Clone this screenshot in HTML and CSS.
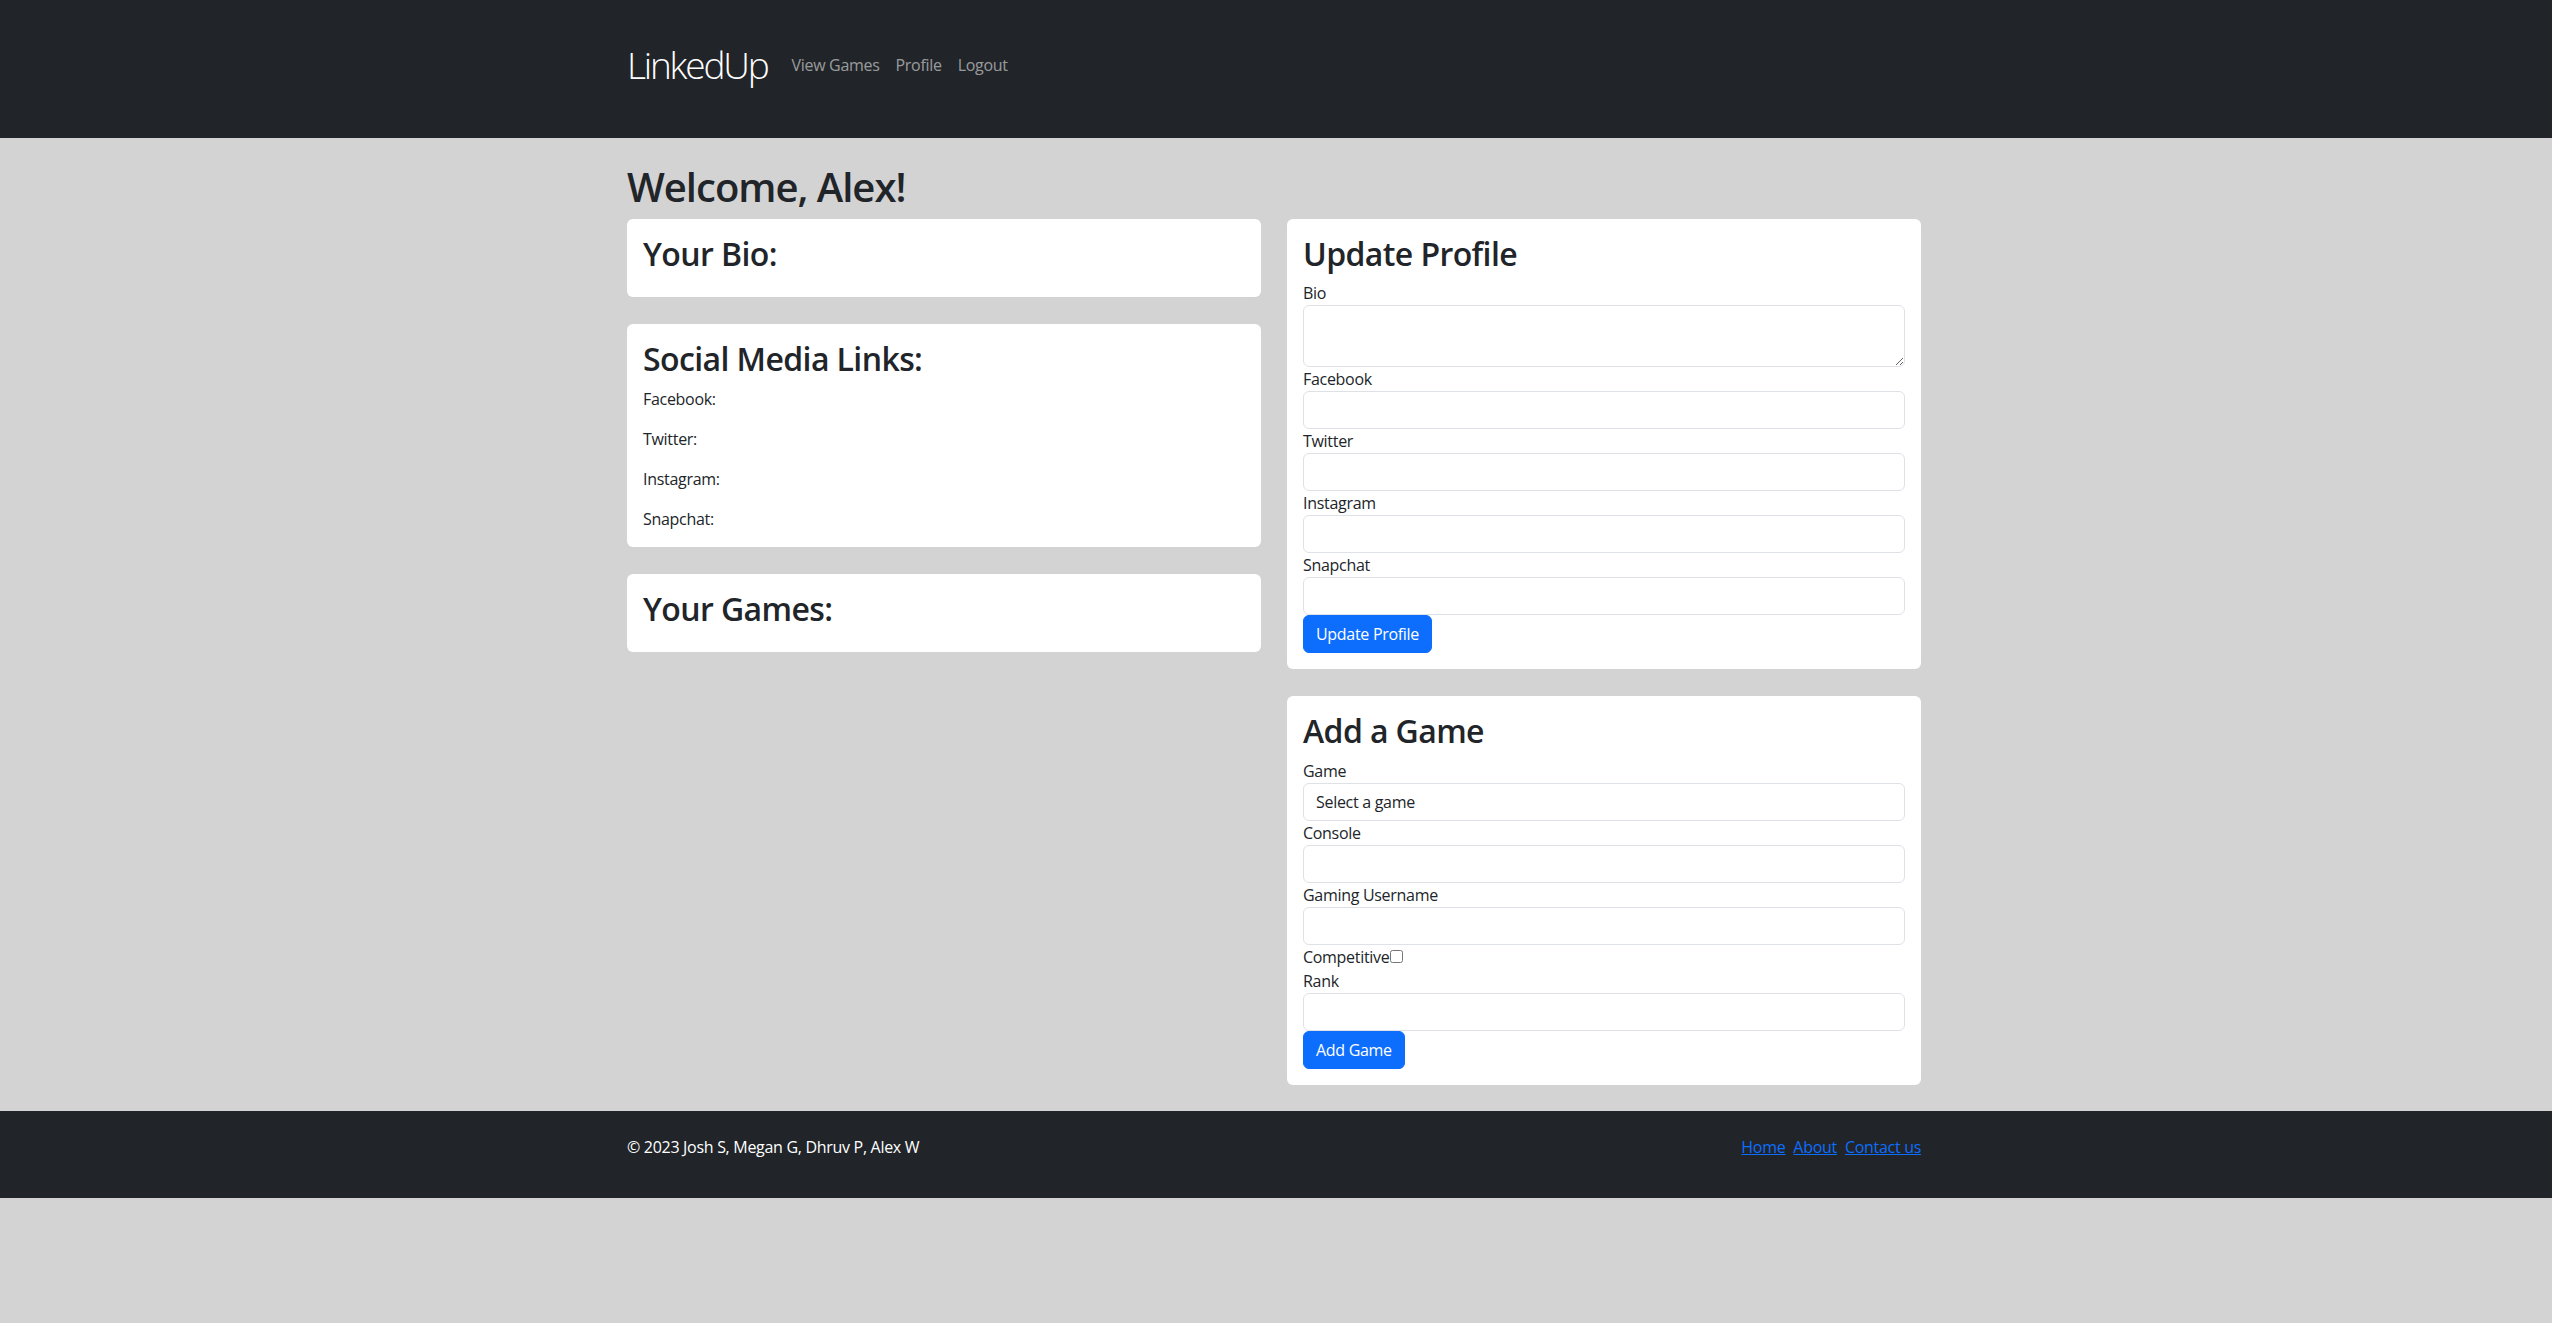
FILE: index.html
```html
<!DOCTYPE html>
<html lang="en">
<head>
<meta charset="utf-8">
<title>LinkedUp - Profile</title>
<link rel="stylesheet" href="styles.css">
</head>
<body>
<header class="navbar">
  <div class="container nav-inner">
    <a class="brand" href="#">LinkedUp</a>
    <nav class="nav-links">
      <a class="nav-link" href="#">View Games</a>
      <a class="nav-link" href="#">Profile</a>
      <a class="nav-link" href="#">Logout</a>
    </nav>
  </div>
</header>

<main class="main">
  <div class="container">
    <h1 class="welcome">Welcome, Alex!</h1>
    <div class="columns">
      <div class="col">
        <section class="card">
          <h2 class="card-title">Your Bio:</h2>
        </section>
        <section class="card">
          <h2 class="card-title">Social Media Links:</h2>
          <p class="card-text">Facebook:</p>
          <p class="card-text">Twitter:</p>
          <p class="card-text">Instagram:</p>
          <p class="card-text">Snapchat:</p>
        </section>
        <section class="card">
          <h2 class="card-title">Your Games:</h2>
        </section>
      </div>
      <div class="col">
        <section class="card">
          <h2 class="card-title">Update Profile</h2>
          <form class="form">
            <div class="field"><label for="bio">Bio</label><textarea id="bio" class="input textarea" rows="2"></textarea></div>
            <div class="field"><label for="fb">Facebook</label><input id="fb" class="input" type="text"></div>
            <div class="field"><label for="tw">Twitter</label><input id="tw" class="input" type="text"></div>
            <div class="field"><label for="ig">Instagram</label><input id="ig" class="input" type="text"></div>
            <div class="field"><label for="sc">Snapchat</label><input id="sc" class="input" type="text"></div>
            <button class="btn" type="button">Update Profile</button>
          </form>
        </section>
        <section class="card">
          <h2 class="card-title">Add a Game</h2>
          <form class="form">
            <div class="field"><label for="game">Game</label><select id="game" class="input select"><option>Select a game</option></select></div>
            <div class="field"><label for="console">Console</label><input id="console" class="input" type="text"></div>
            <div class="field"><label for="gu">Gaming Username</label><input id="gu" class="input" type="text"></div>
            <div class="field check-field"><label for="comp">Competitive</label><input id="comp" class="check" type="checkbox"></div>
            <div class="field"><label for="rank">Rank</label><input id="rank" class="input" type="text"></div>
            <button class="btn" type="button">Add Game</button>
          </form>
        </section>
      </div>
    </div>
  </div>
</main>

<footer class="footer">
  <div class="container footer-inner">
    <p class="copyright">© 2023 Josh S, Megan G, Dhruv P, Alex W</p>
    <div class="footer-links">
      <a href="#">Home</a>
      <a href="#">About</a>
      <a href="#">Contact us</a>
    </div>
  </div>
</footer>
</body>
</html>
```
FILE: styles.css
```css
* {
  box-sizing: border-box;
}

html, body {
  margin: 0;
  padding: 0;
}

body {
  background: #d3d3d3;
  color: #212529;
  font-family: "Open Sans", "Noto Sans", "Liberation Sans", sans-serif;
  font-size: 16px;
  line-height: 1.5;
  letter-spacing: -0.3px;
}

.container {
  width: 1298px;
  margin: 0 auto;
  padding-right: 4px;
}

/* Navbar */
.navbar {
  background: #212529;
  height: 138px;
  padding-bottom: 9px;
  display: flex;
  align-items: center;
}

.nav-inner {
  display: flex;
  align-items: center;
}

.brand {
  color: #fff;
  text-decoration: none;
  font-size: 37px;
  font-weight: 300;
  line-height: 1.5;
  letter-spacing: -2.2px;
  margin-right: 16px;
}

.nav-links {
  display: flex;
}

.nav-link {
  color: rgba(255, 255, 255, 0.55);
  text-decoration: none;
  padding: 8px 8px;
  font-size: 16px;
  line-height: 1.5;
}

/* Main */
.main {
  padding: 24px 0 26px;
}

.welcome {
  font-size: 40px;
  font-weight: 600;
  line-height: 1.2;
  letter-spacing: -1px;
  margin: 0 0 8px;
  padding-top: 1px;
}

.columns {
  display: grid;
  grid-template-columns: 1fr 1fr;
  column-gap: 26px;
  align-items: start;
}

.col {
  display: flex;
  flex-direction: column;
  gap: 27px;
}

.card {
  background: #fff;
  border-radius: 6px;
  padding: 16px;
}

.card-title {
  font-size: 32px;
  font-weight: 600;
  line-height: 1.2;
  letter-spacing: -0.6px;
  margin: 0 0 8px;
}

.card-text {
  margin: 0 0 16px;
}

.card-text:last-child {
  margin-bottom: 0;
}

/* Forms */
.form {
  margin: 0;
}

.field label {
  font-size: 16px;
}

.input {
  display: block;
  width: 100%;
  height: 38px;
  padding: 6px 12px;
  font-family: inherit;
  font-size: 16px;
  line-height: 1.5;
  letter-spacing: inherit;
  color: #212529;
  background: #fff;
  border: 1px solid #dee2e6;
  border-radius: 6px;
  outline: none;
}

.textarea {
  height: 62px;
  resize: vertical;
}

.select {
  appearance: none;
  -webkit-appearance: none;
}

.check-field {
  display: flex;
  align-items: center;
  height: 24px;
}

.check {
  margin: 0 0 0 1px;
  width: 13px;
  height: 13px;
}

.btn {
  display: inline-block;
  background: #0d6efd;
  color: #fff;
  border: 1px solid #0d6efd;
  border-radius: 6px;
  padding: 6px 12px;
  font-family: inherit;
  font-size: 16px;
  line-height: 1.5;
  letter-spacing: inherit;
  cursor: pointer;
}

/* Footer */
.footer {
  background: #212529;
  color: #fff;
  padding: 24px 0;
}

.footer-inner {
  display: flex;
  justify-content: space-between;
  align-items: flex-start;
}

.copyright {
  margin: 0 0 15px;
}

.footer-links {
  display: flex;
  gap: 8px;
}

.footer-links a {
  color: #0d6efd;
  text-decoration: underline;
}
```
